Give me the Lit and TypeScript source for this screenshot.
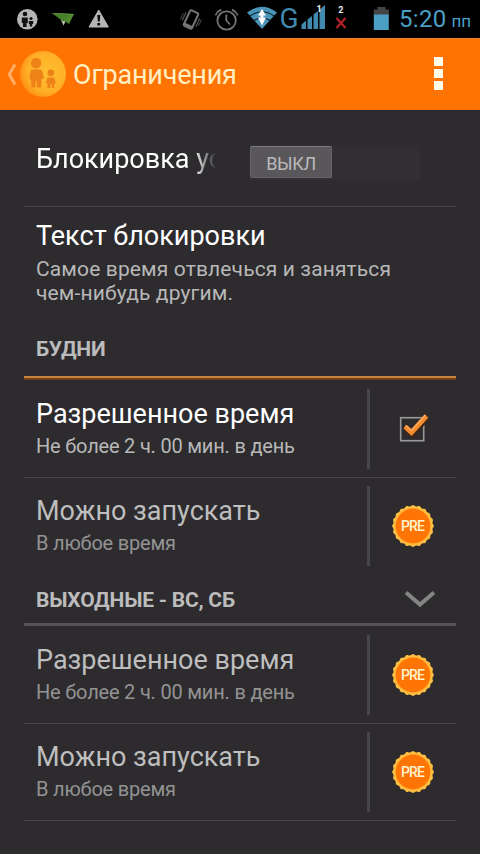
import { LitElement, html, css, svg, nothing } from "lit";
import { customElement, property } from "lit/decorators.js";

@customElement("status-bar")
class StatusBar extends LitElement {
  static styles = css`
    :host { display: flex; height: 38px; background: #000; color: #4b9fc4; font-family: Roboto, "Noto Sans", sans-serif; }
    .icons { display: block; flex: none; }
    .clock { display: flex; align-items: baseline; padding-top: 5px; margin-left: -1px; line-height: 29px; font-size: 24px; letter-spacing: 0.3px; white-space: nowrap; }
    .half { font-size: 17px; margin-left: 5px; letter-spacing: 0; }
    .net { font: 28px Roboto, sans-serif; fill: #4189ae; }
    .sim { font: 700 9px Roboto, sans-serif; fill: #eee; }
  `;
  render() {
    return html`
      <svg class="icons" width="400" height="38" viewBox="0 0 400 38">
        <circle cx="27.3" cy="19.3" r="10.3" fill="#b5b5b5" />
        <g fill="#111">
          <circle cx="25" cy="14" r="2.3" />
          <path d="M21.8 17.5h6v5.5h-1.2v4h-3.6v-4h-1.2z" />
          <circle cx="31" cy="18.5" r="1.6" />
          <path d="M28.8 21h4.4v3h-1v2.5h-2.4V24h-1z" />
        </g>
        <path d="M52 13l22 1-5 10-6-4z" fill="#4f8a2c" />
        <path d="M52 13l22 1-12 5z" fill="#6da644" />
        <path d="M52 13l20 1.700-10 6z" fill="#48802a" />
        <path d="M61 20l4.500 1.500-2 4z" fill="#b9c9b0" />
        <path d="M98.700 10.500l9.300 16.300H89.400z" fill="#b5b5b5" stroke="#b5b5b5" stroke-width="1.400" stroke-linejoin="round" />
        <path d="M97.300 15h3l-.6 6.500h-1.800zM97.400 23h2.700v2.500h-2.700z" fill="#080808" />
        <g transform="rotate(25 191 19.500)" fill="none" stroke="#747474">
          <rect x="186.500" y="11" width="9" height="17" rx="1.200" stroke-width="2" />
          <path d="M186.500 26.500h9" stroke-width="3.400" />
          <path d="M183.500 15v9M198.500 15v9" stroke="#5a5a5a" stroke-width="1.100" />
          <path d="M181.500 17v7M200.500 15v7" stroke="#464646" stroke-width="1" />
        </g>
        <g fill="none" stroke="#747474" stroke-width="1.800">
          <circle cx="226.600" cy="20.500" r="9.200" />
          <path d="M226.300 14.500V20.500L230 24.500M215.500 15.300Q217.200 11.400 221.200 9.700M232 9.700Q236 11.400 237.700 15.300" />
        </g>
        <path d="M247 12.500Q262 1 277 12.500L262 29z" fill="#4a94b7" />
        <path d="M250 16Q262 7.500 274 16M254 20.500Q262 15 270 20.500" fill="none" stroke="#0b2430" stroke-width="1.200" />
        <path d="M262 9l4 6.500h-2.500v2h2.500l-4 8-4-8h2.500v-2H258z" fill="#fff" />
        <text class="net" x="279.500" y="27.500">G</text>
        <path d="M301.500 29v-4.500l4.500-4V29zM307.500 29V19.500l4.500-3.500V29zM313.500 29V14.500l4.500-3.500V29zM319.500 29V9.500l5.500-4.500v24z" fill="#4189ae" />
        <text class="sim" x="316.500" y="11.500">1</text>
        <text class="sim" x="338.200" y="13">2</text>
        <path d="M336.500 18l9 10M345.500 18l-9 10" stroke="#b01f26" stroke-width="2.400" />
        <path d="M377.500 7h8v2.500h3.300V15h-15V9.500h3.700z" fill="#454545" />
        <path d="M373.800 14.500h15V30h-15z" fill="#4b9fc4" />
      </svg>
      <div class="clock">5:20<span class="half">пп</span></div>
    `;
  }
}

@customElement("action-bar")
class ActionBar extends LitElement {
  static styles = css`
    :host { display: flex; height: 71px; border-top: 1px solid #f08035; background: #ff7302; font-family: Roboto, "Noto Sans", sans-serif; }
    svg { display: block; flex: none; }
    .title { flex: 1; font-size: 27px; line-height: 32px; padding-top: 20px; color: #fff0c4; white-space: nowrap; letter-spacing: -0.2px; }
    .more { display: flex; flex-direction: column; gap: 3px; padding: 18px 37.5px 0 0; }
    .dot { width: 9px; height: 9px; background: #fffbea; }
  `;
  render() {
    return html`
      <svg width="73" height="71" viewBox="0 39 73 71">
        <defs>
          <radialGradient id="glow" cx="0.6" cy="0.45" r="0.6">
            <stop offset="0" stop-color="#ffbf30" />
            <stop offset="0.75" stop-color="#ffae25" />
            <stop offset="1" stop-color="#ff9114" />
          </radialGradient>
        </defs>
        <path d="M15 64.500L9.300 74.300L15 84.500" fill="none" stroke="#ffae68" stroke-width="3" />
        <circle cx="43" cy="74" r="23" fill="url(#glow)" />
        <g fill="#ee8218">
          <circle cx="36.200" cy="63" r="5.200" />
          <path d="M31 70q5.300-1.500 10.800 0q1.700 4 2.200 8.500l-2.300.500-.700 8.500h-4v-6h-1.500v6h-4l-.500-8-1.500-.500q0-5 1.500-9z" />
          <circle cx="50.800" cy="72.800" r="3.400" />
          <path d="M47.500 77.500h6.800l1.600 5.500-1.700.800V88h-2.500v-3.500h-1.500V88h-2.700v-4.200l-1.600-.800z" />
        </g>
      </svg>
      <div class="title">Ограничения</div>
      <div class="more"><div class="dot"></div><div class="dot"></div><div class="dot"></div></div>
    `;
  }
}

function badgePoints(): string {
  const points: string[] = [];
  const count = 20;
  for (let i = 0; i < count * 6; i++) {
    const angle = (i / (count * 6)) * Math.PI * 2;
    const radius = 20.3 + 0.6 * Math.cos(angle * count);
    points.push(`${(21.5 + radius * Math.sin(angle)).toFixed(2)},${(21.5 - radius * Math.cos(angle)).toFixed(2)}`);
  }
  return points.join(" ");
}

@customElement("limit-row")
class LimitRow extends LitElement {
  @property() heading = "";
  @property() summary = "";
  @property({ type: Boolean, reflect: true }) checked = false;
  @property({ type: Boolean, reflect: true }) compact = false;

  static styles = css`
    :host { display: flex; box-sizing: border-box; height: 97px; padding-top: 9px; color: #bebebe; }
    :host([compact]) { height: 96px; padding-top: 8px; }
    .text { flex: 1; padding: 9px 0 0 12px; white-space: nowrap; }
    .heading { font-size: 27px; line-height: 32px; }
    .summary { font-size: 20px; line-height: 24px; margin-top: 4px; color: #939393; letter-spacing: -0.2px; }
    :host([checked]) .heading { color: #fff; }
    :host([checked]) .summary { color: #b8b8b8; }
    .rule { width: 3px; height: 80px; background: #474648; }
    .widget { width: 86px; height: 80px; }
    .pre { font: 500 14px Roboto, sans-serif; fill: #fff4d0; }
    svg { display: block; }
  `;
  render() {
    const check = svg`
      <rect x="30.700" y="28.700" width="23" height="23" fill="none" stroke="#999" stroke-width="1.600" />
      <path d="M36 39.500L42.500 45.500L56.500 29" fill="none" stroke="#3b2418" stroke-width="6" />
      <path d="M35 37.500L41.500 43.500L56.500 27" fill="none" stroke="#f58a2c" stroke-width="5" />
      <path d="M35.500 36.500L41.500 41.500L55.500 26" fill="none" stroke="#ffab5c" stroke-width="1.500" />`;
    const badge = svg`
      <g transform="translate(21.500 18.500)">
        <polygon points=${badgePoints()} fill="#ffbd41" />
        <circle cx="21.500" cy="21.500" r="17.400" fill="#ff7505" />
        <text class="pre" x="21.500" y="26.500" text-anchor="middle" textLength="24">PRE</text>
      </g>`;
    return html`
      <div class="text">
        <div class="heading">${this.heading}</div>
        <div class="summary">${this.summary}</div>
      </div>
      <div class="rule"></div>
      <svg class="widget" width="86" height="80" viewBox="0 0 86 80">${this.checked ? check : badge}</svg>
    `;
  }
}

@customElement("section-title")
class SectionTitle extends LitElement {
  @property() label = "";
  @property({ type: Boolean }) collapsible = false;

  static styles = css`
    :host { display: flex; justify-content: space-between; box-sizing: border-box; padding: 0 20px 0 12px; color: #bcbcbc; }
    .label { font-size: 21px; font-weight: 700; line-height: 24px; letter-spacing: -0.23px; white-space: nowrap; }
  `;
  render() {
    return html`
      <div class="label">${this.label}</div>
      ${this.collapsible
        ? html`<svg width="32" height="24" viewBox="0 0 32 24"><path d="M2 4.500L16 16.500L30 4.500" fill="none" stroke="#858585" stroke-width="4" /></svg>`
        : nothing}
    `;
  }
}

@customElement("app-root")
class AppRoot extends LitElement {
  static styles = css`
    :host { display: block; width: 480px; height: 854px; overflow: hidden; background: #2d2b2e; font-family: Roboto, "Noto Sans", sans-serif; }
    .list { padding: 0 24px; }
    .line { height: 1px; background: #474648; }
    .lock { display: flex; height: 96px; }
    .lock-name { width: 180px; margin: 33px 0 0 12px; height: 34px; font-size: 27px; line-height: 32px; color: #fff; white-space: nowrap; -webkit-mask-image: linear-gradient(to right, #000 158px, transparent 180px); mask-image: linear-gradient(to right, #000 158px, transparent 180px); }
    .switch { width: 170px; height: 35px; margin: 35px 0 0 34px; background: #312f32; }
    .thumb { box-sizing: border-box; width: 82px; height: 32px; margin-top: 1px; border: 1px solid #656466; border-top-color: #7b7a7c; border-radius: 2px; background: #59575a; color: #bababa; font-size: 18px; line-height: 33px; letter-spacing: -0.4px; text-align: center; }
    .message { box-sizing: border-box; height: 130px; padding: 13px 0 0 12px; }
    .message-title { font-size: 27px; line-height: 32px; color: #fff; }
    .message-body { margin-top: 5px; font-size: 21px; line-height: 24px; letter-spacing: 0.13px; color: #b8b8b8; white-space: nowrap; }
    .weekdays { height: 39px; }
    .active-line { height: 2px; background: #ca8240; border-bottom: 2px solid #70401a; }
    .weekend { height: 35px; margin-top: 14px; }
    .idle-line { height: 3px; background: #555356; }
  `;
  render() {
    return html`
      <status-bar></status-bar>
      <action-bar></action-bar>
      <div class="list">
        <div class="lock">
          <div class="lock-name">Блокировка ус</div>
          <div class="switch"><div class="thumb">ВЫКЛ</div></div>
        </div>
        <div class="line"></div>
        <div class="message">
          <div class="message-title">Текст блокировки</div>
          <div class="message-body">Самое время отвлечься и заняться<br />чем-нибудь другим.</div>
        </div>
        <section-title class="weekdays" label="БУДНИ"></section-title>
        <div class="active-line"></div>
        <limit-row checked heading="Разрешенное время" summary="Не более 2 ч. 00 мин. в день"></limit-row>
        <div class="line"></div>
        <limit-row compact heading="Можно запускать" summary="В любое время"></limit-row>
        <section-title class="weekend" collapsible label="ВЫХОДНЫЕ - ВС, СБ"></section-title>
        <div class="idle-line"></div>
        <limit-row heading="Разрешенное время" summary="Не более 2 ч. 00 мин. в день"></limit-row>
        <div class="line"></div>
        <limit-row compact heading="Можно запускать" summary="В любое время"></limit-row>
        <div class="line"></div>
      </div>
    `;
  }
}
